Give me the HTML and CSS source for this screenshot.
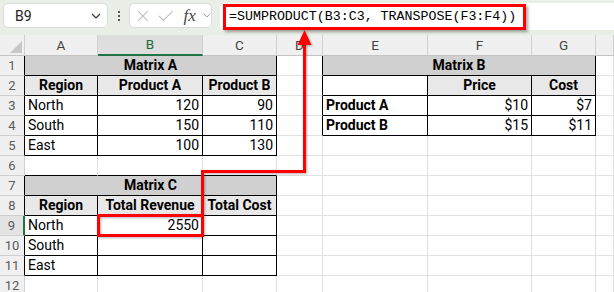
FILE: index.html
```html
<!DOCTYPE html>
<html lang="en">
<head>
    <meta charset="UTF-8">
    <meta name="viewport" content="width=device-width, initial-scale=1.0">
    <title>SUMPRODUCT with TRANSPOSE</title>
    <link rel="stylesheet" href="styles.css">
</head>
<body>
    <!-- Formula bar -->
    <div class="toolbar">
        <div class="namebox">
            <span>B9</span>
            <svg width="10" height="6" viewBox="0 0 10 6"><path d="M1 1 L5 5 L9 1" fill="none" stroke="#333" stroke-width="1.2"/></svg>
        </div>
        <div class="dots"><i></i><i></i><i></i></div>
        <div class="fxbox">
            <svg width="12" height="12" viewBox="0 0 12 12"><path d="M1 1 L11 11 M11 1 L1 11" stroke="#bdbdbd" stroke-width="1.1"/></svg>
            <svg width="16" height="12" viewBox="0 0 16 12"><path d="M1 6 L5.5 10.5 L15 1" fill="none" stroke="#bdbdbd" stroke-width="1.1"/></svg>
            <span class="fx">fx</span>
            <svg width="8" height="5" viewBox="0 0 8 5"><path d="M0.5 0.5 L4 4 L7.5 0.5" fill="none" stroke="#999" stroke-width="1"/></svg>
        </div>
        <div class="formula">
            <span class="callout">=SUMPRODUCT(B3:C3, TRANSPOSE(F3:F4))</span>
        </div>
    </div>

    <!-- Sheet grid -->
    <table class="sheet">
        <colgroup>
            <col class="c-hd"><col class="c-a"><col class="c-b"><col class="c-c"><col class="c-d">
            <col class="c-e"><col class="c-f"><col class="c-g"><col class="c-h">
        </colgroup>
        <tr class="colhead">
            <th class="corner"><div><svg width="12" height="12" viewBox="0 0 12 12"><path d="M12 0 L12 12 L0 12 Z" fill="#c8c8c8"/></svg></div></th>
            <th>A</th><th class="sel">B</th><th>C</th><th>D</th><th>E</th><th>F</th><th>G</th><th></th>
        </tr>
        <tr>
            <th class="ml">1</th>
            <td class="m title" colspan="3">Matrix A</td>
            <td class="ml"></td>
            <td class="m title" colspan="3">Matrix B</td>
            <td></td>
        </tr>
        <tr>
            <th class="ml">2</th>
            <td class="m hd">Region</td><td class="m hd">Product A</td><td class="m hd">Product B</td>
            <td class="ml"></td>
            <td class="m"></td><td class="m hd">Price</td><td class="m hd">Cost</td>
            <td></td>
        </tr>
        <tr>
            <th class="ml">3</th>
            <td class="m">North</td><td class="m num">120</td><td class="m num">90</td>
            <td class="ml"></td>
            <td class="m b">Product A</td><td class="m num">$10</td><td class="m num">$7</td>
            <td></td>
        </tr>
        <tr>
            <th class="ml">4</th>
            <td class="m">South</td><td class="m num">150</td><td class="m num">110</td>
            <td class="ml"></td>
            <td class="m b">Product B</td><td class="m num">$15</td><td class="m num">$11</td>
            <td></td>
        </tr>
        <tr>
            <th class="ml">5</th>
            <td class="m">East</td><td class="m num">100</td><td class="m num">130</td>
            <td></td><td></td><td></td><td></td><td></td>
        </tr>
        <tr>
            <th>6</th>
            <td class="mt"></td><td class="mt"></td><td class="mt"></td>
            <td></td><td></td><td></td><td></td><td></td>
        </tr>
        <tr>
            <th class="ml">7</th>
            <td class="m title" colspan="3">Matrix C</td>
            <td></td><td></td><td></td><td></td><td></td>
        </tr>
        <tr>
            <th class="ml">8</th>
            <td class="m hd">Region</td><td class="m hd">Total Revenue</td><td class="m hd">Total Cost</td>
            <td></td><td></td><td></td><td></td><td></td>
        </tr>
        <tr>
            <th class="rowsel">9</th>
            <td class="m">North</td><td class="m num">2550</td><td class="m"></td>
            <td></td><td></td><td></td><td></td><td></td>
        </tr>
        <tr>
            <th class="ml">10</th>
            <td class="m">South</td><td class="m"></td><td class="m"></td>
            <td></td><td></td><td></td><td></td><td></td>
        </tr>
        <tr>
            <th class="ml">11</th>
            <td class="m">East</td><td class="m"></td><td class="m"></td>
            <td></td><td></td><td></td><td></td><td></td>
        </tr>
        <tr>
            <th>12</th>
            <td></td><td></td><td></td><td></td><td></td><td></td><td></td><td></td>
        </tr>
    </table>

    <!-- Callout arrow from the formula to B9 -->
    <svg class="arrow" width="614" height="292" viewBox="0 0 614 292">
        <path d="M304.5 42 V171.5 H202.5 V214" fill="none" stroke="#ff0000" stroke-width="3"/>
        <polygon points="304.5,30 297.5,45 311.5,45" fill="#ff0000"/>
        <rect x="98.5" y="215.5" width="104" height="20" fill="none" stroke="#ff0000" stroke-width="3"/>
    </svg>
</body>
</html>
```

FILE: styles.css
```css
* {
    margin: 0;
    padding: 0;
    box-sizing: border-box;
}

body {
    font-family: Roboto, "Liberation Sans", sans-serif;
    background-color: #fff;
    width: 614px;
    height: 292px;
    overflow: hidden;
    position: relative;
}

/* Formula bar */
.toolbar {
    display: flex;
    align-items: flex-start;
    height: 35px;
    padding: 3px 0 0 3px;
    background-color: #e9efe6;
}

.namebox {
    display: flex;
    align-items: center;
    justify-content: space-between;
    width: 105px;
    height: 25px;
    padding: 0 6px 0 11px;
    background-color: #fff;
    border: 1px solid #d9ddd6;
    border-radius: 5px;
    font-size: 14px;
    color: #222;
}

.dots {
    display: flex;
    flex-direction: column;
    align-items: center;
    gap: 2px;
    width: 21px;
    padding-top: 8px;
}

.dots i {
    display: block;
    width: 2px;
    height: 2px;
    background-color: #555;
}

.fxbox {
    display: flex;
    align-items: center;
    width: 83px;
    height: 25px;
    padding-left: 7px;
    background-color: #fff;
    border: 1px solid #d9ddd6;
    border-radius: 5px;
}

.fxbox svg:nth-child(2) {
    margin-left: 9px;
}

.fx {
    margin-left: 10px;
    width: 16px;
    font-family: "Liberation Serif", serif;
    font-style: italic;
    font-size: 17px;
    color: #444;
}

.fxbox svg:last-child {
    margin-left: 4px;
}

.formula {
    flex: 1;
    height: 27px;
    margin-left: 8px;
    background-color: #fff;
    border-radius: 5px 0 0 5px;
}

.callout {
    display: block;
    width: 303px;
    height: 26px;
    margin: 1px 0 0 3px;
    padding-left: 3px;
    border: 3px solid #ff0000;
    box-shadow: 2px 2px 3px rgba(0, 0, 0, 0.35);
    font-family: "Liberation Mono", monospace;
    font-size: 13.3px;
    line-height: 20px;
    color: #000;
    white-space: nowrap;
}

/* Sheet grid */
.sheet {
    border-spacing: 0;
    table-layout: fixed;
    width: 614px;
    font-size: 14px;
}

.c-hd { width: 25px; }
.c-a { width: 73px; }
.c-b { width: 105px; }
.c-c { width: 74px; }
.c-d { width: 46px; }
.c-e { width: 105px; }
.c-f { width: 104px; }
.c-g { width: 64px; }
.c-h { width: 18px; }

.sheet td,
.sheet th {
    height: 20px;
    padding: 0 3px;
    border-right: 1px solid #e1e1e1;
    border-bottom: 1px solid #e1e1e1;
    line-height: 19px;
    white-space: nowrap;
    overflow: hidden;
    color: #000;
}

.sheet th {
    padding: 0;
    font-weight: normal;
    font-size: 13px;
    color: #5a5a5a;
    background-color: #f0f0f0;
    border-right-color: #d0d0d0;
    border-bottom-color: #d0d0d0;
}

.colhead th {
    height: 21px;
    font-size: 13.5px;
    color: #444;
    border-bottom-color: #c4c4c4;
}

.colhead th.sel {
    background-color: #dedede;
    color: #1a6b3b;
    border-bottom: 2px solid #217346;
}

.corner div {
    display: flex;
    justify-content: flex-end;
    align-items: flex-end;
    height: 20px;
    padding: 0 2px 2px 0;
}

.corner svg {
    display: block;
}

.sheet th.rowsel {
    background-color: #e3e3e3;
    border-right: 2px solid #217346;
}

/* Matrix tables */
.sheet td.m {
    border-right-color: #000;
    border-bottom-color: #000;
}

.sheet .ml {
    border-right-color: #000;
}

.sheet td.mt {
    border-bottom-color: #000;
}

.sheet td.title {
    background-color: #d0d0d0;
    font-weight: bold;
    text-align: center;
}

.sheet td.hd {
    background-color: #e8e8e8;
    font-weight: bold;
    text-align: center;
}

.sheet td.b {
    font-weight: bold;
}

.sheet td.num {
    text-align: right;
}

/* Callout arrow */
.arrow {
    position: absolute;
    top: 0;
    left: 0;
    pointer-events: none;
    filter: drop-shadow(1px 1px 1px rgba(0, 0, 0, 0.3));
}
```
